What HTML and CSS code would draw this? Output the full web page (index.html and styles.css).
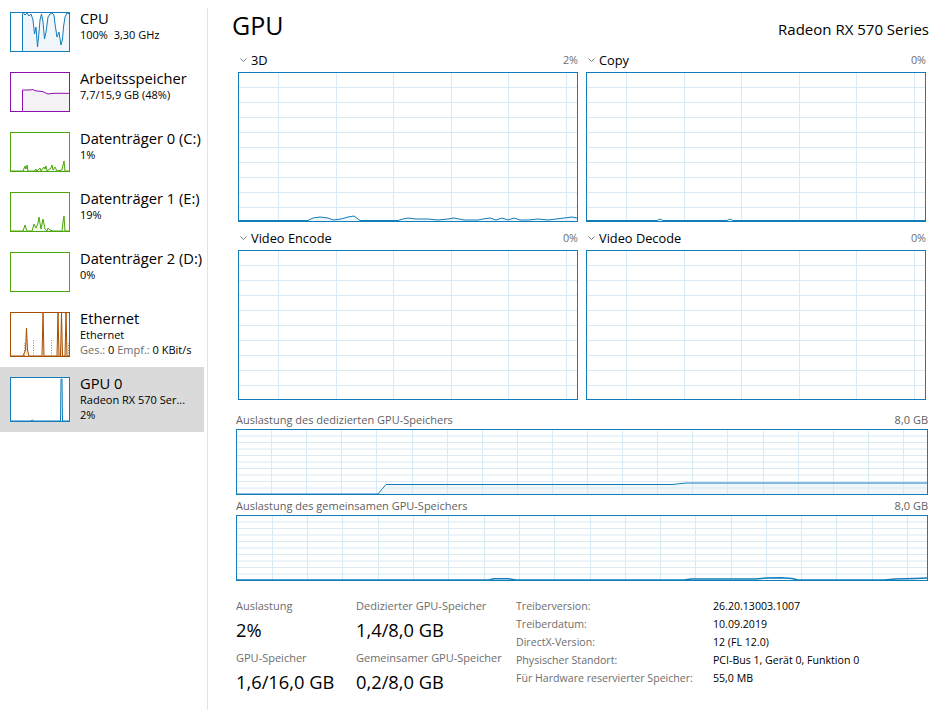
FILE: index.html
```html
<!DOCTYPE html>
<html lang="de">
<head>
<meta charset="utf-8">
<title>Task-Manager – GPU</title>
<link rel="stylesheet" href="styles.css">
</head>
<body>
<div class="app">
  <nav class="side">
    <div class="item">
      <svg class="thumb" viewBox="0 0 60 40">
        <polygon class="a-cpu" points="12.5,39.5 12.5,2 13.5,1 15,3 17,1 19,4 21,2 23,8 24.5,22 26,15 27.5,35 29,20 30,8 31.5,2 33,10 34.5,27 36,20 38,5 40,2 42,1 44,3 45,12 47,25 49,20 51,33 52.5,27 53.5,15 55,5 57,1 59.5,2 59.5,39.5"/>
        <polyline class="l-cpu" points="12.5,39.5 12.5,2 13.5,1 15,3 17,1 19,4 21,2 23,8 24.5,22 26,15 27.5,35 29,20 30,8 31.5,2 33,10 34.5,27 36,20 38,5 40,2 42,1 44,3 45,12 47,25 49,20 51,33 52.5,27 53.5,15 55,5 57,1 59.5,2"/>
        <rect class="f-cpu" x="0.5" y="0.5" width="59" height="39"/>
      </svg>
      <div class="txt"><div class="t">CPU</div><div class="s">100%&nbsp; 3,30 GHz</div></div>
    </div>
    <div class="item">
      <svg class="thumb" viewBox="0 0 60 40">
        <polygon class="a-mem" points="12.5,39.5 12.5,18 20,18 23,17.5 25,18.7 33,19.7 38,22 43,21.3 59.5,21.3 59.5,39.5"/>
        <polyline class="l-mem" points="12.5,39.5 12.5,18 20,18 23,17.5 25,18.7 33,19.7 38,22 43,21.3 59.5,21.3"/>
        <rect class="f-mem" x="0.5" y="0.5" width="59" height="39"/>
      </svg>
      <div class="txt"><div class="t">Arbeitsspeicher</div><div class="s">7,7/15,9 GB (48%)</div></div>
    </div>
    <div class="item">
      <svg class="thumb" viewBox="0 0 60 40">
        <polygon class="a-disk" points="0.5,39 13,39 15,34 16,37 17,33 18,39 25,39 26,37 27,39 30,36 31,39 34,35 35,37 36,34 37,39 41,36 42,33 43,38 45,35 47,39 52,38 53,33 54,29 55,39 59.5,39 59.5,39.5 0.5,39.5"/>
        <polyline class="l-disk" points="0.5,39 13,39 15,34 16,37 17,33 18,39 25,39 26,37 27,39 30,36 31,39 34,35 35,37 36,34 37,39 41,36 42,33 43,38 45,35 47,39 52,38 53,33 54,29 55,39 59.5,39"/>
        <rect class="f-disk" x="0.5" y="0.5" width="59" height="39"/>
      </svg>
      <div class="txt"><div class="t">Datenträger 0 (C:)</div><div class="s">1%</div></div>
    </div>
    <div class="item">
      <svg class="thumb" viewBox="0 0 60 40">
        <polygon class="a-disk" points="0.5,39 13,39 15,33 17,39 22,39 24,32 26,36 28,31 29,25 31,37 33,27 35,37 37,39 38,36 40,38 43,39 52,39 53,30 54,24 55,39 59.5,39 59.5,39.5 0.5,39.5"/>
        <polyline class="l-disk" points="0.5,39 13,39 15,33 17,39 22,39 24,32 26,36 28,31 29,25 31,37 33,27 35,37 37,39 38,36 40,38 43,39 52,39 53,30 54,24 55,39 59.5,39"/>
        <rect class="f-disk" x="0.5" y="0.5" width="59" height="39"/>
      </svg>
      <div class="txt"><div class="t">Datenträger 1 (E:)</div><div class="s">19%</div></div>
    </div>
    <div class="item">
      <svg class="thumb" viewBox="0 0 60 40">
        <rect class="f-disk" x="0.5" y="0.5" width="59" height="39"/>
      </svg>
      <div class="txt"><div class="t">Datenträger 2 (D:)</div><div class="s">0%</div></div>
    </div>
    <div class="item">
      <svg class="thumb tall" viewBox="0 0 60 45">
        <polygon class="a-eth" points="0.5,44 13,44 15.5,38 16.5,16 17.5,38 19,44 32,44 33,1 34,44 47,44 48,1 49,44 50.5,44 51.5,1 52.5,44 55,44 56,1 57,44 59.5,44"/>
        <polyline class="l-eth" points="0.5,44 13,44 15.5,38 16.5,16 17.5,38 19,44 32,44 33,1 34,44 47,44 48,1 49,44 50.5,44 51.5,1 52.5,44 55,44 56,1 57,44 59.5,44"/>
        <path class="d-eth" d="M14.5 44V31M23.5 44V27M41.5 44V27M58.5 44V31"/>
        <rect class="f-eth" x="0.5" y="0.5" width="59" height="44"/>
      </svg>
      <div class="txt"><div class="t">Ethernet</div><div class="s">Ethernet</div><div class="s"><span class="g">Ges.:</span> 0 <span class="g">Empf.:</span> 0 KBit/s</div></div>
    </div>
    <div class="item sel">
      <svg class="thumb tall" viewBox="0 0 60 45">
        <polygon class="a-cpu" points="0.5,44 21,44 22,43 24,44 50.5,44 51,2 52,2 52.5,44 59.5,44"/>
        <polyline class="l-cpu" points="0.5,44 21,44 22,43 24,44 50.5,44 51,2 52,2 52.5,44 59.5,44"/>
        <rect class="f-cpu" x="0.5" y="0.5" width="59" height="44"/>
      </svg>
      <div class="txt"><div class="t">GPU 0</div><div class="s">Radeon RX 570 Ser...</div><div class="s">2%</div></div>
    </div>
  </nav>
  <div class="divider"></div>
  <main class="main">
    <header class="head">
      <h1 class="title">GPU</h1>
      <div class="model">Radeon RX 570 Series</div>
    </header>

    <section class="engines">
      <div class="engine">
        <div class="elabel"><svg class="chev" viewBox="0 0 7 4"><path d="M0.5 0.5L3.5 3.5L6.5 0.5"/></svg><span class="ename">3D</span><span class="pct">2%</span></div>
        <svg class="graph" viewBox="0 0 340 150">
          <polygon class="area" points="1,149 70,149 75,146 82,145 90,146 95,148 103,147 110,145 116,144 120,147 122,149 160,149 165,147 170,146 178,147 190,147 200,148 210,147 216,146 226,148 240,148 245,147 252,146 258,148 264,146 270,148 276,146 282,148 290,148 300,147 310,148 318,147 326,146 334,145 339,146 339,149"/>
          <path class="grid" d="M40.5 1V149M98.5 1V149M155.5 1V149M213.5 1V149M270.5 1V149M328.5 1V149M1 15.5H339M1 30.5H339M1 45.5H339M1 60.5H339M1 75.5H339M1 90.5H339M1 105.5H339M1 120.5H339M1 135.5H339"/>
          <polyline class="line" points="1,148.5 70,148.5 75,146 82,145 90,146 95,148 103,147 110,145 116,144 120,147 122,148.5 160,148.5 165,147 170,146 178,147 190,147 200,148 210,147 216,146 226,148 240,148 245,147 252,146 258,148 264,146 270,148 276,146 282,148 290,148 300,147 310,148 318,147 326,146 334,145 339,146"/>
          <rect class="frame" x="0.5" y="0.5" width="339" height="149"/>
        </svg>
      </div>
      <div class="engine">
        <div class="elabel"><svg class="chev" viewBox="0 0 7 4"><path d="M0.5 0.5L3.5 3.5L6.5 0.5"/></svg><span class="ename">Copy</span><span class="pct">0%</span></div>
        <svg class="graph" viewBox="0 0 340 150">
          <path class="grid" d="M40.5 1V149M98.5 1V149M155.5 1V149M213.5 1V149M270.5 1V149M328.5 1V149M1 15.5H339M1 30.5H339M1 45.5H339M1 60.5H339M1 75.5H339M1 90.5H339M1 105.5H339M1 120.5H339M1 135.5H339"/>
          <polyline class="line" points="1,148.5 71,148.5 74,147 77,148.5 141,148.5 144,147 147,148.5 339,148.5"/>
          <rect class="frame" x="0.5" y="0.5" width="339" height="149"/>
        </svg>
      </div>
      <div class="engine">
        <div class="elabel"><svg class="chev" viewBox="0 0 7 4"><path d="M0.5 0.5L3.5 3.5L6.5 0.5"/></svg><span class="ename">Video Encode</span><span class="pct">0%</span></div>
        <svg class="graph" viewBox="0 0 340 150">
          <path class="grid" d="M40.5 1V149M98.5 1V149M155.5 1V149M213.5 1V149M270.5 1V149M328.5 1V149M1 15.5H339M1 30.5H339M1 45.5H339M1 60.5H339M1 75.5H339M1 90.5H339M1 105.5H339M1 120.5H339M1 135.5H339"/>
          <rect class="frame" x="0.5" y="0.5" width="339" height="149"/>
        </svg>
      </div>
      <div class="engine">
        <div class="elabel"><svg class="chev" viewBox="0 0 7 4"><path d="M0.5 0.5L3.5 3.5L6.5 0.5"/></svg><span class="ename">Video Decode</span><span class="pct">0%</span></div>
        <svg class="graph" viewBox="0 0 340 150">
          <path class="grid" d="M40.5 1V149M98.5 1V149M155.5 1V149M213.5 1V149M270.5 1V149M328.5 1V149M1 15.5H339M1 30.5H339M1 45.5H339M1 60.5H339M1 75.5H339M1 90.5H339M1 105.5H339M1 120.5H339M1 135.5H339"/>
          <rect class="frame" x="0.5" y="0.5" width="339" height="149"/>
        </svg>
      </div>
    </section>

    <section class="mem first">
      <div class="mlabel"><span>Auslastung des dedizierten GPU-Speichers</span><span>8,0 GB</span></div>
      <svg class="mgraph" viewBox="0 0 692 66">
        <polygon class="area" points="142,65 153,55.5 436,55.5 450,54 691,54 691,65"/>
        <path class="grid" d="M35.5 1V65M70.5 1V65M105.5 1V65M140.5 1V65M176.5 1V65M211.5 1V65M246.5 1V65M281.5 1V65M316.5 1V65M351.5 1V65M386.5 1V65M421.5 1V65M456.5 1V65M491.5 1V65M527.5 1V65M562.5 1V65M597.5 1V65M632.5 1V65M667.5 1V65M1 7H691M1 13.5H691M1 20H691M1 26.5H691M1 33H691M1 39.5H691M1 46H691M1 52.5H691M1 59H691"/>
        <polyline class="line" points="1,65 142,65 150,55.5 436,55.5 450,54 691,54"/>
        <rect class="frame" x="0.5" y="0.5" width="691" height="65"/>
      </svg>
    </section>

    <section class="mem">
      <div class="mlabel"><span>Auslastung des gemeinsamen GPU-Speichers</span><span>8,0 GB</span></div>
      <svg class="mgraph" viewBox="0 0 692 66">
        <path class="grid" d="M36.5 1V65M71.5 1V65M106.5 1V65M142.5 1V65M177.5 1V65M212.5 1V65M248.5 1V65M283.5 1V65M318.5 1V65M354.5 1V65M389.5 1V65M424.5 1V65M459.5 1V65M495.5 1V65M530.5 1V65M565.5 1V65M600.5 1V65M636.5 1V65M671.5 1V65M1 7H691M1 13.5H691M1 20H691M1 26.5H691M1 33H691M1 39.5H691M1 46H691M1 52.5H691M1 59H691"/>
        <polyline class="line thick" points="1,65 253,65 258,63.8 272,63.8 280,65 448,65 455,64 520,64 530,63 545,62.8 556,63.5 562,65 648,65 660,64 680,63.5 691,63"/>
        <rect class="frame" x="0.5" y="0.5" width="691" height="65"/>
      </svg>
    </section>

    <section class="stats">
      <div class="sgrid">
        <div class="stat"><div class="sl">Auslastung</div><div class="sv">2%</div></div>
        <div class="stat"><div class="sl">Dedizierter GPU-Speicher</div><div class="sv">1,4/8,0 GB</div></div>
        <div class="stat"><div class="sl">GPU-Speicher</div><div class="sv">1,6/16,0 GB</div></div>
        <div class="stat"><div class="sl">Gemeinsamer GPU-Speicher</div><div class="sv">0,2/8,0 GB</div></div>
      </div>
      <dl class="info">
        <dt>Treiberversion:</dt><dd>26.20.13003.1007</dd>
        <dt>Treiberdatum:</dt><dd>10.09.2019</dd>
        <dt>DirectX-Version:</dt><dd>12 (FL 12.0)</dd>
        <dt>Physischer Standort:</dt><dd>PCI-Bus 1, Gerät 0, Funktion 0</dd>
        <dt>Für Hardware reservierter Speicher:</dt><dd>55,0 MB</dd>
      </dl>
    </section>
  </main>
</div>
</body>
</html>
```
FILE: styles.css
```css
html, body {
  margin: 0;
  padding: 0;
  background: #ffffff;
}
body {
  font-family: "Open Sans", "Noto Sans", sans-serif;
  color: #000;
}
.app {
  display: flex;
  width: 945px;
  height: 714px;
  overflow: hidden;
}

/* ---------- sidebar ---------- */
.side {
  width: 204px;
  flex: none;
  padding-top: 2px;
}
.item {
  display: flex;
  align-items: flex-start;
  gap: 10px;
  padding: 10px 0 10px 10px;
}
.item.sel {
  background: #dadada;
}
.thumb {
  display: block;
  flex: none;
  width: 60px;
  height: 40px;
  background: #ffffff;
}
.thumb.tall {
  height: 45px;
}
.txt {
  margin-top: -3px;
  white-space: nowrap;
}
.txt .t {
  font-size: 14.7px;
  line-height: 18px;
}
.txt .s {
  font-size: 11px;
  line-height: 15px;
}
.txt .g {
  color: #6d6d6d;
}

.a-cpu { fill: #f1f6fa; }
.l-cpu { fill: none; stroke: #117dbb; stroke-width: 1; }
.f-cpu { fill: none; stroke: #117dbb; stroke-width: 1; }
.a-mem { fill: #f4f2f4; }
.l-mem { fill: none; stroke: #8b12ae; stroke-width: 1; }
.f-mem { fill: none; stroke: #8b12ae; stroke-width: 1; }
.a-disk { fill: #eff7e9; }
.l-disk { fill: none; stroke: #4da60c; stroke-width: 1; }
.f-disk { fill: none; stroke: #4da60c; stroke-width: 1; }
.a-eth { fill: #f6e6d8; }
.l-eth { fill: none; stroke: #a74f01; stroke-width: 1; }
.d-eth { fill: none; stroke: #c2773a; stroke-width: 1; stroke-dasharray: 1 1.5; }
.f-eth { fill: none; stroke: #a74f01; stroke-width: 1; }

.divider {
  flex: none;
  width: 1px;
  background: #e3e3e3;
  margin: 8px 0 4px 3px;
}

/* ---------- main ---------- */
.main {
  flex: 1;
  min-width: 0;
  padding: 0 17px 0 28px;
}
.head {
  display: flex;
  justify-content: space-between;
  align-items: baseline;
  padding: 8px 0 7px;
}
.title {
  margin: 0 0 0 -4px;
  font-size: 25px;
  line-height: 34px;
  font-weight: 400;
}
.model {
  font-size: 15px;
  margin-right: -1px;
}

.engines {
  display: grid;
  grid-template-columns: 340px 340px;
  column-gap: 8px;
  row-gap: 5px;
  margin: 0 2px;
}
.elabel {
  display: flex;
  align-items: center;
  height: 21px;
  margin-bottom: 2px;
}
.chev {
  width: 7px;
  height: 4px;
  margin: 0 4px 0 2px;
  flex: none;
}
.chev path {
  fill: none;
  stroke: #7a7a7a;
  stroke-width: 1;
}
.ename {
  font-size: 12.8px;
}
.pct {
  margin-left: auto;
  font-size: 10.8px;
  color: #6d6d6d;
}
.graph {
  display: block;
  width: 340px;
  height: 150px;
  background: #ffffff;
}
.area { fill: #f1f6fa; }
.grid { fill: none; stroke: #d9eaf4; stroke-width: 1; }
.line { fill: none; stroke: #117dbb; stroke-width: 1; }
.line.thick { stroke-width: 1.5; }
.frame { fill: none; stroke: #117dbb; stroke-width: 1; }

.mem {
  margin-top: 2px;
}
.mem.first {
  margin-top: 11px;
}
.mlabel {
  display: flex;
  justify-content: space-between;
  height: 18px;
  line-height: 18px;
  font-size: 11px;
  color: #5f5f5f;
}
.mgraph {
  display: block;
  width: 692px;
  height: 66px;
  background: #ffffff;
}

/* ---------- stats ---------- */
.stats {
  display: flex;
  margin-top: 16px;
}
.sgrid {
  display: grid;
  grid-template-columns: 120px 160px;
  row-gap: 4px;
  flex: none;
}
.sl {
  font-size: 11px;
  line-height: 18px;
  color: #6d6d6d;
}
.sv {
  font-size: 18.3px;
  line-height: 30px;
}
.info {
  display: grid;
  grid-template-columns: 197px auto;
  margin: 0;
  font-size: 10.6px;
  line-height: 18px;
  align-content: start;
}
.info dt {
  color: #6d6d6d;
}
.info dd {
  margin: 0;
  color: #000;
}
```
